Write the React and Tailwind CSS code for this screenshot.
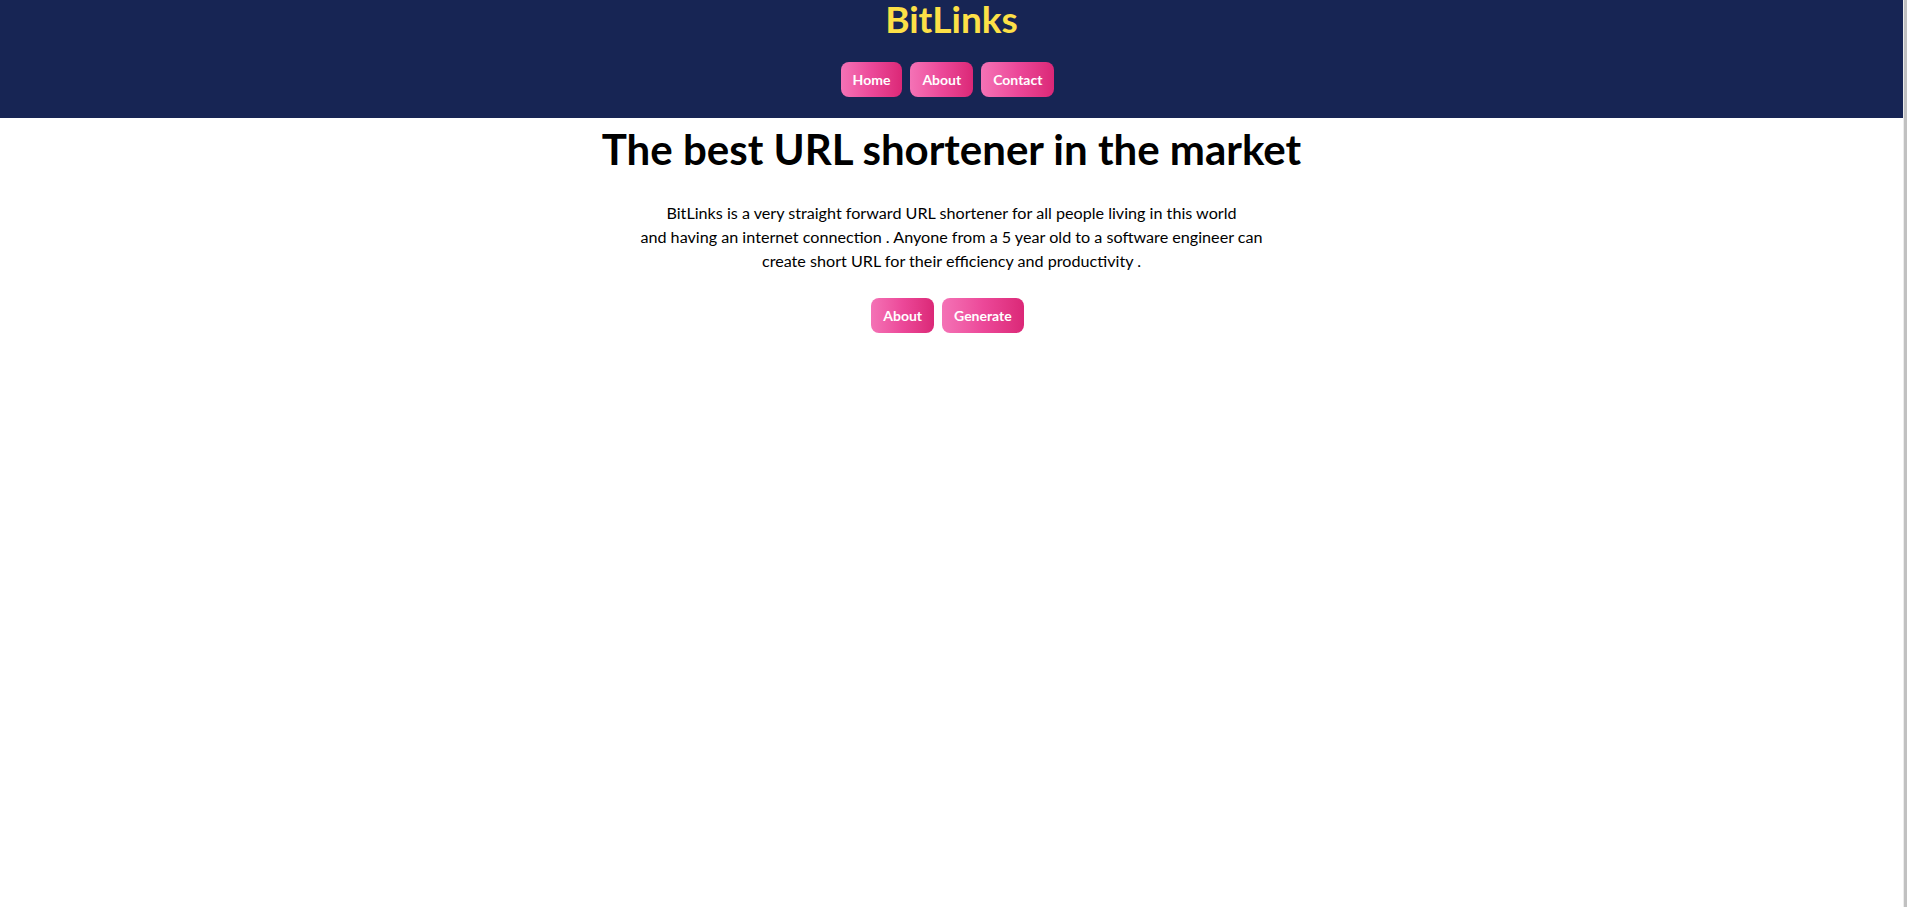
import React from "react";

const btn =
  "text-white font-bold text-[14px] leading-5 px-3 py-[7.5px] rounded-lg bg-linear-to-r from-[#f472b6] via-[#ec4899] to-[#db2777] hover:bg-linear-to-br";

export default function App() {
  return (
    <div className="flex h-screen w-full overflow-hidden bg-white" style={{ fontFamily: "Lato, 'Open Sans', sans-serif" }}>
      <div className="flex-1 min-w-0">
        <nav className="h-[118px] bg-[#172554] flex flex-col items-center">
          <div className="text-[37px] leading-[38px] font-bold text-[#fde047]">BitLinks</div>
          <ul className="mt-[24px] flex">
            <li><button className={`${btn} mr-2`}>Home</button></li>
            <li><button className={`${btn} mr-2`}>About</button></li>
            <li><button className={`${btn} mr-2`}>Contact</button></li>
          </ul>
        </nav>

        <main className="flex flex-col items-center text-black">
          <h1 className="mt-[6px] text-[42px] leading-[50px] font-bold">The best URL shortener in the market</h1>
          <p className="mt-[27px] text-[16.15px] leading-6 text-center">
            BitLinks is a very straight forward URL shortener for all people living in this world
            <br />
            and having an internet connection . Anyone from a 5 year old to a software engineer can
            <br />
            create short URL for their efficiency and productivity .
          </p>
          <div className="mt-[25px] flex">
            <button className={`${btn} mr-2`}>About</button>
            <button className={`${btn} mr-2`}>Generate</button>
          </div>
        </main>
      </div>
      <div className="w-1 bg-[#ececec] pl-px">
        <div className="h-full w-[3px] bg-[#c1c1c1]" />
      </div>
    </div>
  );
}
